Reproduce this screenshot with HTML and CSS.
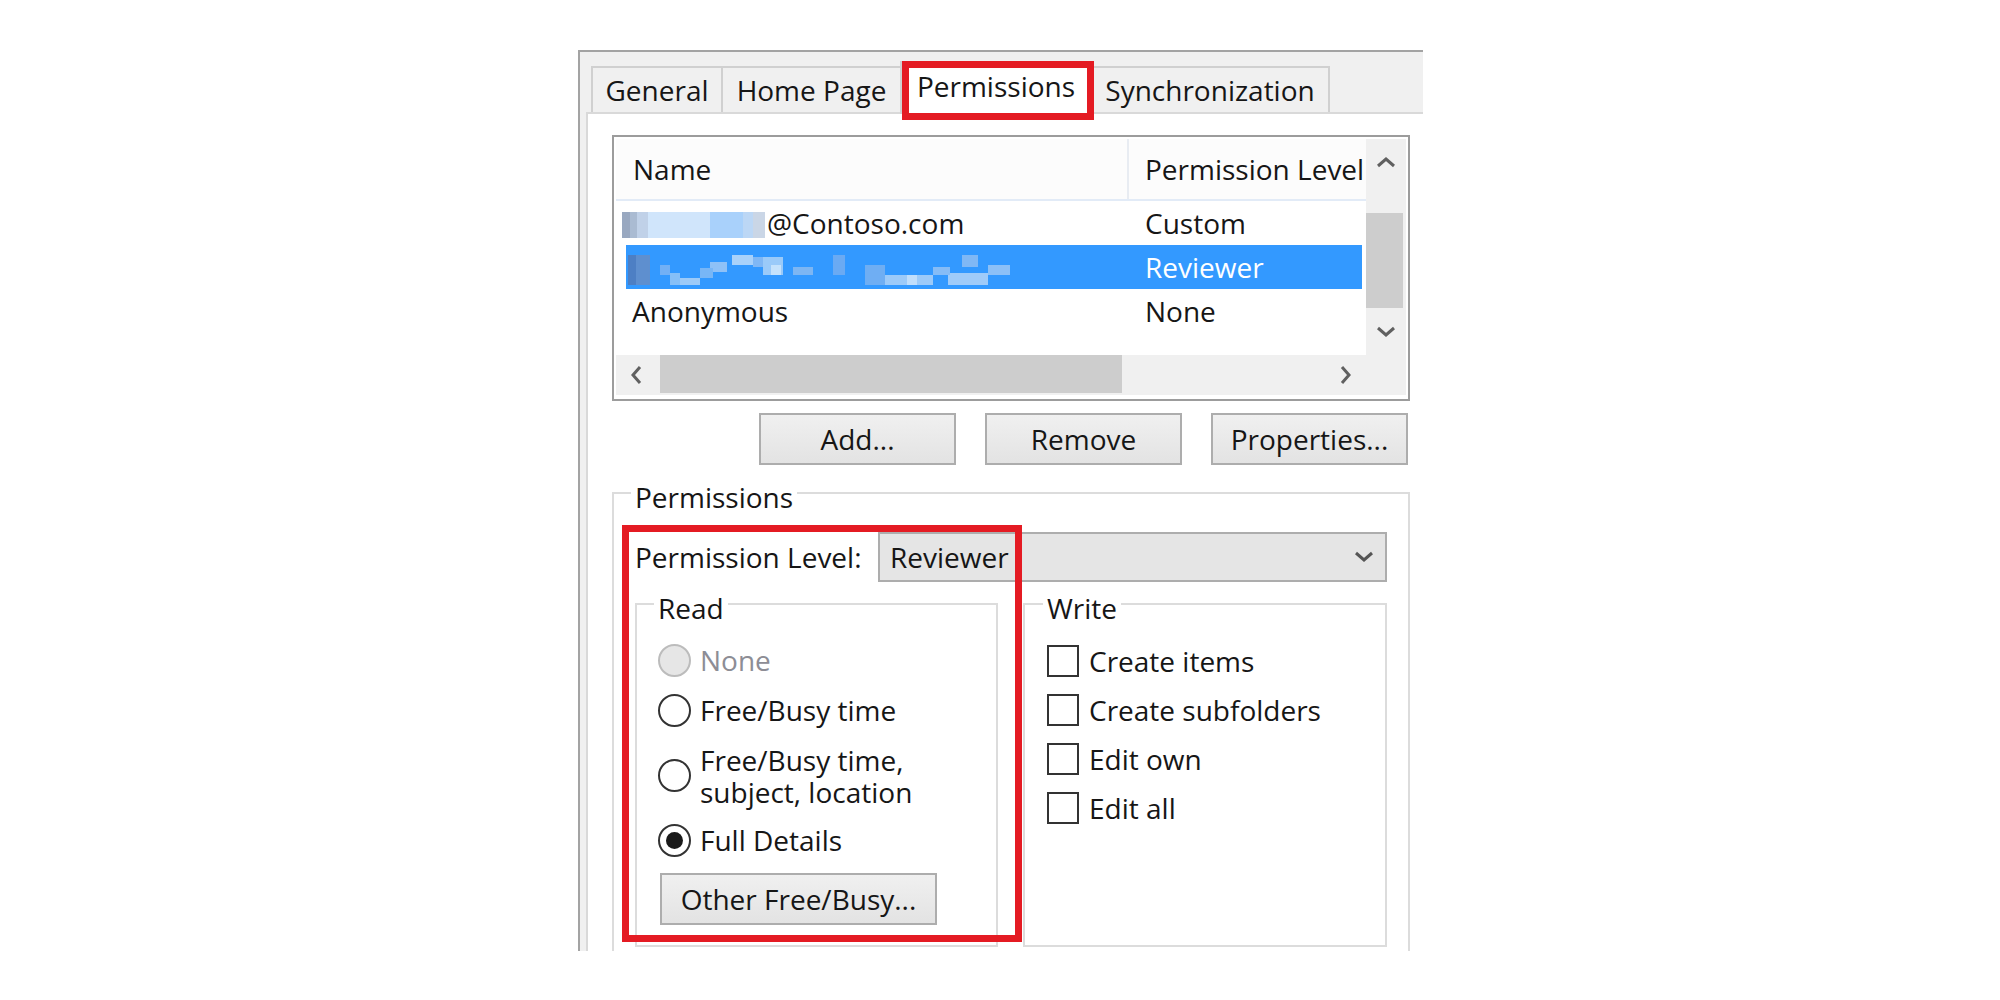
FILE: index.html
```html
<!DOCTYPE html>
<html>
<head>
<meta charset="utf-8">
<title>Permissions</title>
<link rel="stylesheet" href="styles.css">
</head>
<body>
<div class="window">
  <div class="tabstrip">
    <div class="tab t-general">General</div>
    <div class="tab t-home">Home Page</div>
    <div class="tab t-perm selected">Permissions</div>
    <div class="tab t-sync">Synchronization</div>
  </div>
  <div class="panel">
    <div class="listbox">
      <div class="list">
        <div class="lhead"><div class="hc1">Name</div><div class="hc2">Permission Level</div></div>
        <div class="row"><div class="c1"><span class="blur1"></span>@Contoso.com</div><div class="c2">Custom</div></div>
        <div class="row sel"><div class="c1"><span class="blur2"></span></div><div class="c2">Reviewer</div></div>
        <div class="row"><div class="c1">Anonymous</div><div class="c2">None</div></div>
      </div>
      <div class="vscroll">
        <div class="sbtn"><svg width="20" height="12" viewBox="0 0 20 12"><path d="M2 10 L10 3 L18 10" fill="none" stroke="#606060" stroke-width="3"/></svg></div>
        <div class="vtrack"><div class="vthumb"></div></div>
        <div class="sbtn"><svg width="20" height="12" viewBox="0 0 20 12"><path d="M2 2 L10 9 L18 2" fill="none" stroke="#606060" stroke-width="3"/></svg></div>
      </div>
      <div class="hscroll">
        <div class="sbtn h"><svg width="12" height="20" viewBox="0 0 12 20"><path d="M10 2 L3 10 L10 18" fill="none" stroke="#606060" stroke-width="3"/></svg></div>
        <div class="htrack"><div class="hthumb"></div></div>
        <div class="sbtn h"><svg width="12" height="20" viewBox="0 0 12 20"><path d="M2 2 L9 10 L2 18" fill="none" stroke="#606060" stroke-width="3"/></svg></div>
      </div>
      <div class="corner"></div>
    </div>
    <div class="btnrow">
      <button class="btn">Add...</button>
      <button class="btn">Remove</button>
      <button class="btn">Properties...</button>
    </div>
    <fieldset class="grp perms">
      <legend>Permissions</legend>
      <div class="levelrow">
        <span class="lvlabel">Permission Level:</span>
        <div class="combo"><span>Reviewer</span><svg width="20" height="12" viewBox="0 0 20 12"><path d="M2 2 L10 9 L18 2" fill="none" stroke="#555" stroke-width="3"/></svg></div>
      </div>
      <div class="rw">
        <fieldset class="grp read">
          <legend>Read</legend>
          <div class="opt disabled"><span class="radio"></span><span class="lbl">None</span></div>
          <div class="opt"><span class="radio"></span><span class="lbl">Free/Busy time</span></div>
          <div class="opt two"><span class="radio"></span><span class="lbl">Free/Busy time,<br>subject, location</span></div>
          <div class="opt"><span class="radio checked"></span><span class="lbl">Full Details</span></div>
          <button class="btn other">Other Free/Busy...</button>
        </fieldset>
        <fieldset class="grp write">
          <legend>Write</legend>
          <div class="chk"><span class="box"></span><span>Create items</span></div>
          <div class="chk"><span class="box"></span><span>Create subfolders</span></div>
          <div class="chk"><span class="box"></span><span>Edit own</span></div>
          <div class="chk"><span class="box"></span><span>Edit all</span></div>
        </fieldset>
      </div>
    </fieldset>
  </div>
  <div class="mark mark-tab"></div>
  <div class="mark mark-read"></div>
</div>
</body>
</html>
```

FILE: styles.css
```css
* { box-sizing: border-box; }

body {
  margin: 0;
  background: #fff;
  font-family: "Open Sans", "Noto Sans", sans-serif;
  font-size: 28px;
  line-height: 36px;
  color: #161616;
}

.window {
  position: relative;
  margin: 50px 0 0 578px;
  width: 845px;
  height: 901px;
  overflow: hidden;
  background: #f0f0f0;
  border-top: 2px solid #a3a3a3;
  border-left: 2px solid #a3a3a3;
}

/* tabs */
.tabstrip {
  display: flex;
  align-items: flex-end;
  height: 60px;
  padding-left: 11px;
}
.tab {
  height: 46px;
  display: flex;
  align-items: center;
  justify-content: center;
  border: 2px solid #d0d0d0;
  border-bottom: none;
  background: #f0f0f0;
  white-space: nowrap;
}
.tab + .tab { margin-left: -2px; }
.t-general { width: 132px; }
.t-home { width: 181px; }
.t-perm { width: 192px; }
.t-sync { width: 240px; }
.tab.selected {
  position: relative;
  z-index: 2;
  height: 53px;
  margin-bottom: -2px;
  padding-bottom: 6px;
  background: #fff;
}

/* panel */
.panel {
  position: relative;
  height: 839px;
  overflow: hidden;
  margin-left: 6px;
  border-top: 2px solid #d9d9d9;
  border-left: 2px solid #d9d9d9;
  background: #fff;
  padding: 21px 0 0 24px;
}

/* list box */
.listbox {
  width: 798px;
  height: 266px;
  border: 2px solid #9c9c9c;
  padding: 2px 2px 4px 2px;
  display: grid;
  grid-template-columns: 1fr 40px;
  grid-template-rows: 1fr 40px;
  background: #fff;
}
.list { overflow: hidden; }
.lhead {
  display: grid;
  grid-template-columns: 511px 1fr;
  height: 62px;
  border-bottom: 2px solid #e2ebf7;
  background: #fcfcfc;
}
.hc1 { padding-left: 17px; display: flex; align-items: center; }
.hc2 {
  padding-left: 16px;
  display: flex;
  align-items: center;
  border-left: 2px solid #e8ecf2;
  white-space: nowrap;
}
.row {
  display: grid;
  grid-template-columns: 513px 1fr;
  align-items: center;
  height: 44px;
  margin: 0 4px 0 10px;
}
.row .c1 {
  padding-left: 6px;
  display: flex;
  align-items: center;
  white-space: nowrap;
}
.row .c2 { padding-left: 6px; }
.row.sel { background: #3399ff; color: #fff; }

.blur1 {
  display: block;
  width: 143px;
  height: 26px;
  margin: 4px 2px 0 -10px;
  background: linear-gradient(to right,
    #99a8c0 0 8px, #aabbd2 8px 15px, #c0d1e8 15px 26px,
    #d0e5fb 26px 88px, #a9d1fb 88px 121px, #bcd7f5 121px 131px, #cad6e6 131px 143px);
}
.blur2 {
  display: block;
  width: 382px;
  height: 30px;
  margin: 6px 0 0 -4px;
  background:
    linear-gradient(#c5e2fc, #c5e2fc) 143px 10px / 10px 10px no-repeat,
    linear-gradient(#c0defc, #c0defc) 279px 20px / 10px 10px no-repeat,
    linear-gradient(#80b8f5, #80b8f5) 334px 0 / 16px 12px no-repeat,
    linear-gradient(#4d7fc4, #4d7fc4) 0 0 / 8px 30px no-repeat,
    linear-gradient(#5e8fcf, #5e8fcf) 0 0 / 22px 30px no-repeat,
    linear-gradient(#72b0f5, #72b0f5) 32px 10px / 10px 10px no-repeat,
    linear-gradient(#86bff7, #86bff7) 42px 18px / 10px 12px no-repeat,
    linear-gradient(#9ccaf8, #9ccaf8) 52px 23px / 20px 7px no-repeat,
    linear-gradient(#78b6f6, #78b6f6) 72px 13px / 13px 10px no-repeat,
    linear-gradient(#8fc1f7, #8fc1f7) 82px 7px / 17px 10px no-repeat,
    linear-gradient(#a8d1fa, #a8d1fa) 104px 0 / 21px 10px no-repeat,
    linear-gradient(#7fb7f5, #7fb7f5) 125px 2px / 10px 10px no-repeat,
    linear-gradient(#9acaf9, #9acaf9) 135px 2px / 20px 18px no-repeat,
    linear-gradient(#7db6f3, #7db6f3) 165px 12px / 20px 8px no-repeat,
    linear-gradient(#6aaaf3, #6aaaf3) 205px 0 / 12px 20px no-repeat,
    linear-gradient(#6faef3, #6faef3) 237px 10px / 20px 20px no-repeat,
    linear-gradient(#9ccaf9, #9ccaf9) 257px 20px / 48px 10px no-repeat,
    linear-gradient(#86bcf6, #86bcf6) 305px 12px / 17px 8px no-repeat,
    linear-gradient(#9fcbf9, #9fcbf9) 320px 18px / 40px 12px no-repeat,
    linear-gradient(#8cc0f7, #8cc0f7) 360px 10px / 22px 10px no-repeat;
}

/* scrollbars */
.vscroll {
  display: flex;
  flex-direction: column;
  background: #f0f0f0;
}
.sbtn {
  flex: none;
  height: 46px;
  display: flex;
  align-items: center;
  justify-content: center;
}
.vtrack { flex: 1; padding: 28px 3px 0 0; }
.vthumb { height: 95px; background: #cdcdcd; }
.hscroll { display: flex; background: #f0f0f0; }
.sbtn.h { width: 40px; height: auto; }
.htrack { flex: 1; padding: 0 0 2px 4px; }
.hthumb { width: 462px; height: 100%; background: #cdcdcd; }
.corner { background: #f0f0f0; }

/* buttons */
.btnrow {
  display: flex;
  justify-content: flex-end;
  gap: 29px;
  width: 798px;
  padding-right: 2px;
  margin-top: 12px;
}
.btn {
  width: 197px;
  height: 52px;
  padding: 0;
  font: inherit;
  line-height: 1;
  color: inherit;
  border: 2px solid #adadad;
  background: linear-gradient(#f0f0f0, #e3e3e3);
}

/* group boxes */
.grp {
  margin: 0;
  min-width: 0;
  border: 2px solid #dcdcdc;
}
.grp legend {
  padding: 8px 4px 0;
  margin-left: -4px;
  line-height: 36px;
}
.perms {
  width: 798px;
  margin-top: 6px;
  padding: 17px 21px 20px 21px;
}
.levelrow {
  display: flex;
  align-items: center;
  height: 50px;
}
.lvlabel { width: 243px; flex: none; white-space: nowrap; }
.combo {
  width: 510px;
  height: 50px;
  border: 2px solid #adadad;
  background: #e5e5e5;
  display: flex;
  align-items: center;
  justify-content: space-between;
  padding: 0 11px 0 10px;
}
.rw {
  display: grid;
  grid-template-columns: 363px 364px;
  column-gap: 25px;
}
.read { padding: 9px 20px 20px 21px; }
.write { padding: 10px 20px 20px 22px; }

.opt {
  display: flex;
  align-items: center;
  gap: 9px;
  height: 50px;
  white-space: nowrap;
}
.opt.two { height: 80px; }
.opt.two .lbl { line-height: 32px; padding-top: 2px; }
.radio {
  flex: none;
  width: 33px;
  height: 33px;
  border-radius: 50%;
  border: 2px solid #333;
  background: #fff;
  display: flex;
  align-items: center;
  justify-content: center;
}
.radio.checked::after {
  content: "";
  width: 17px;
  height: 17px;
  border-radius: 50%;
  background: #1a1a1a;
}
.opt.disabled { color: #8d8d95; }
.opt.disabled .radio { border-color: #bcbcbc; background: #e6e6e6; }

.btn.other {
  display: block;
  width: 277px;
  margin: 8px 0 0 2px;
}

.chk {
  display: flex;
  align-items: center;
  gap: 10px;
  height: 49px;
  white-space: nowrap;
}
.box {
  flex: none;
  width: 32px;
  height: 32px;
  border: 2px solid #333;
  background: #fff;
}

/* annotation boxes */
.mark {
  position: absolute;
  z-index: 5;
  border: 7px solid #e41b23;
  pointer-events: none;
}
.mark-tab { left: 322px; top: 9px; width: 192px; height: 59px; }
.mark-read { left: 42px; top: 473px; width: 400px; height: 417px; }
```
